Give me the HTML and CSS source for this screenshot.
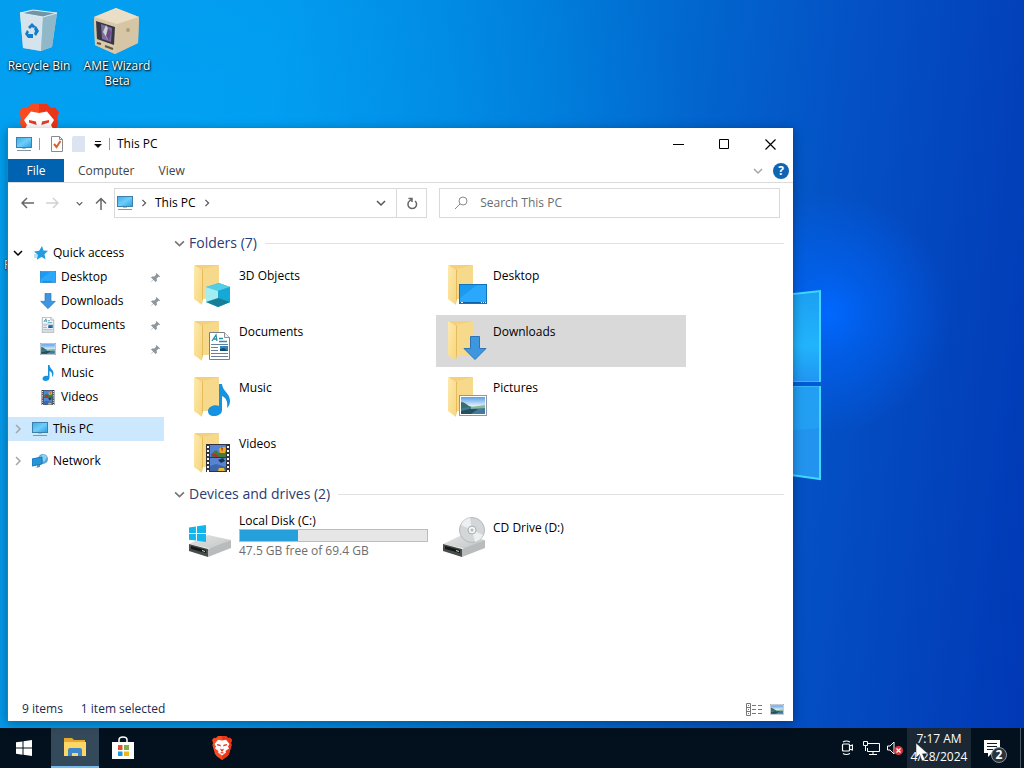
FILE: index.html
```html
<!DOCTYPE html>
<html lang="en">
	<head>
		<title>This PC</title>
		<meta charset="UTF-8">
		<link rel="stylesheet" href="styles.css">
	</head>
	<body>
		<!-- shared icons -->
		<svg class="defs" width="0" height="0">
			<defs>
				<linearGradient id="screen" x1="0" y1="0" x2="1" y2="1"><stop offset="0" stop-color="#3aaeea"/><stop offset=".5" stop-color="#6fcdf8"/><stop offset="1" stop-color="#2b9fe2"/></linearGradient>
				<linearGradient id="flap" x1="0" y1="0" x2="1" y2="1"><stop offset="0" stop-color="#fdeab0"/><stop offset="1" stop-color="#f7d67c"/></linearGradient>
				<linearGradient id="metal" x1="0" y1="0" x2="1" y2="1"><stop offset="0" stop-color="#e3e3e3"/><stop offset="1" stop-color="#c4c6c7"/></linearGradient>
				<linearGradient id="sky" x1="0" y1="0" x2="0" y2="1"><stop offset="0" stop-color="#5b9fe8"/><stop offset=".5" stop-color="#d9ecfa"/><stop offset="1" stop-color="#8cb6c9"/></linearGradient>
				<linearGradient id="pane" x1="0" y1="0" x2="0" y2="1"><stop offset="0" stop-color="#1c9ff2"/><stop offset=".6" stop-color="#21b4fc"/><stop offset="1" stop-color="#2095f2"/></linearGradient>
			</defs>
			<symbol id="i-pc" viewBox="0 0 16 16">
				<rect x=".5" y="1.5" width="15" height="10" fill="url(#screen)" stroke="#3c80ab"/>
				<path d="M6 12h4v1H6z" fill="#9fc4da"/><path d="M1 14.500h14" stroke="#8496a3"/>
			</symbol>
			<symbol id="i-folder" viewBox="0 0 36 42">
				<path d="M2 1h24v34H9z" fill="#f3d07c"/><path d="M9 5l17-4v34H9z" fill="#f6d98a"/>
				<path d="M1 1l8 5v35l-8-6z" fill="url(#flap)"/><path d="M9 6v34l1-5V5z" fill="#e5bb5c"/>
			</symbol>
			<symbol id="i-desktop" viewBox="0 0 28 20">
				<rect x=".5" y=".5" width="27" height="19" fill="#1b9af0" stroke="#1173bb"/><path d="M1 14L18 1h9v18H1z" fill="#2ba8fb"/>
				<path d="M1 18.500h27" stroke="#0c63a6"/><path d="M2 18.500h2M22 18.500h1M24 18.500h1M26 18.500h1" stroke="#fff"/>
			</symbol>
			<symbol id="i-down" viewBox="0 0 24 24">
				<path d="M7.500.5h9v12h6.500L12 23.500 1 12.500h6.500z" fill="#3e96de" stroke="#2a75b8"/>
			</symbol>
			<symbol id="i-doc" viewBox="0 0 21 28">
				<path d="M.5.5h15l5 5v22H.5z" fill="#fff" stroke="#777f87"/><path d="M15.500.5v5h5" fill="#eef1f3" stroke="#8a9299"/>
				<path d="M3 9l4-6 1 6M4 7h4M10 6.500h4M10 9.500h8" fill="none" stroke="#2c8fa8" stroke-width="1.300"/>
				<path d="M2 12.500h17M2 15.500h7M2 18.500h7M2 21.500h17M2 24.500h17" stroke="#67809c"/>
				<path d="M11 14h8v5h-8z" fill="#3184bd"/><path d="M11 17l4-1 4 3h-8z" fill="#174a68"/>
			</symbol>
			<symbol id="i-note" viewBox="0 0 22 32">
				<path d="M11 0h3c1 8 8 9 8 17 0 3-1 5-3 7 1-7-1-10-5-12v14c0 4-4 6-8 6-4 0-6-2-6-5 0-4 6-7 11-5z" fill="#1592e0"/>
			</symbol>
			<symbol id="i-pic" viewBox="0 0 28 21">
				<rect x=".5" y=".5" width="27" height="20" fill="#fff" stroke="#8c98a4"/><path d="M2 2h24v17H2z" fill="url(#sky)"/>
				<path d="M2 7c3 0 5 2 8 4l6 2-14 3z" fill="#396e68"/><path d="M2 14c7-3 17-1 24-1v6H2z" fill="#417b9c"/><path d="M2 16l13-3 4 1-7 5H2z" fill="#244f5b"/><path d="M12 12l14-2v3l-14 1z" fill="#8fb79a"/>
			</symbol>
			<symbol id="i-film" viewBox="0 0 24 28">
				<path d="M0 0h24v28H0z" fill="#33343a"/><path d="M4 1h16v12H4zM4 14h16v13H4z" fill="#5684d4"/>
				<path d="M5 10l5-4 3 3 7-2v6H5z" fill="#3c7d3a"/><path d="M13 5l2-2h4l1 2-1 4h-5z" fill="#e7ae25"/><path d="M15 3l2 1-1 4M5 10h5l3 3H9z" fill="#b12d39"/>
				<path d="M4 22l6-2 10 3v4H4z" fill="#3d67aa"/><path d="M13 24h5l1 3h-7z" fill="#e8bc31"/><path d="M12 16l5-2 2 3-4 2z" fill="#1e3553"/>
				<path d="M2 2v26M22 2v26" stroke="#fff" stroke-width="2" stroke-dasharray="2 2"/>
			</symbol>
			<symbol id="i-cube" viewBox="0 0 24 24">
				<path d="M0 4L13 0l11 4v15l-12 5L0 19z" fill="#1fa6c9"/><path d="M0 4L13 0l11 4-12 4z" fill="#52cfe6"/><path d="M0 4l12 4v16L0 19z" fill="#a3edf2"/><path d="M12 8l12-4v15l-12 5z" fill="#17a9d6"/><path d="M0 19l12-4 12 4-12 5z" fill="#167f98"/>
			</symbol>
			<symbol id="i-pin" viewBox="0 0 12 12">
				<path d="M7 1l4 4-1 .5-.8-.3-2 2 .3 2.600L6 11 3.700 8.500.8 11.300l-.2-.2L3.400 8 1 6l1.300-1.200 2.500.2 2-2L6.500 2z" fill="#8c959c"/>
			</symbol>
			<symbol id="i-down-chev" viewBox="0 0 10 10"><path d="M1 3l4 4 4-4" fill="none" stroke="currentColor" stroke-width="1.500"/></symbol>
			<symbol id="i-right-chev" viewBox="0 0 10 10"><path d="M3 1l4 4-4 4" fill="none" stroke="currentColor" stroke-width="1.500"/></symbol>
			<symbol id="i-win" viewBox="0 0 16 16"><path d="M0 2.300L6.500 1.400v6.200H0zM7.500 1.200L16 0v7.600H7.500zM0 8.500h6.500v6.200L0 13.800zM7.500 8.500H16V16l-8.500-1.200z" fill="currentColor"/></symbol>
			<symbol id="i-drive" viewBox="0 0 42 24">
				<path d="M0 11L19 2l23 5-19 9z" fill="url(#metal)"/><path d="M0 11l19 5v8L0 18z" fill="#4a4b4d"/><path d="M19 16L42 7v8l-23 9z" fill="#b9bcbd"/>
				<path d="M2 13l15 4v3L2 16z" fill="#171819"/><path d="M13 17l3 1v1l-3-1z" fill="#b8f0a5"/>
			</symbol>
			<symbol id="i-brave" viewBox="0 0 20 24">
				<path d="M6 0h8l2 2 2-.3L20 4l-1 3 .6 2-2.600 9-2 2.600L10 24l-5-3.400L3 18 .4 9 1 7 0 4l2-2.300L4 2z" fill="#fa4a20"/>
				<path d="M10 0h4l2 2 2-.3L20 4l-1 3 .6 2-2.600 9-2 2.600L10 24z" fill="#ea3518"/>
				<path d="M10 4.500l4-.7L17.500 8l-1.500 2.500 1 2-3.500 2.500.5 1.500-4 3-4-3 .5-1.500L3 12.500l1-2L2.500 8 6 3.800z" fill="#fff"/>
				<path d="M5 8l3.500.8.3 1.700L5 9.300zM15 8l-3.500.8-.3 1.700L15 9.300zM8 12.500l2 1 2-1-1 2.500-1 .8L9 15zM7.500 17l2.500-1 2.500 1-2.500.5z" fill="#e63a24"/>
			</symbol>
		</svg>

		<main class="desktop">
			<svg class="wall-logo" viewBox="0 0 38 200">
				<path d="M0 12l36-4v91H0z" fill="url(#pane)"/><path d="M0 103h36v93l-36-5z" fill="#2294ef"/><path d="M0 103h36v42l-36 3z" fill="#229ff3"/>
				<path d="M0 12l36-4v91M36 103v93l-36-5" fill="none" stroke="#3fd9ff" stroke-width="2"/><path d="M0 98.500h35M0 103.500h35" stroke="#34b7f8"/>
			</svg>
			<ul class="shortcuts">
				<li>
					<svg width="48" height="48" viewBox="0 0 48 48">
						<path d="M5 6l13-3 24 3-5 34-11 4-18-3z" fill="#a5cde0"/><path d="M6 7l13-4 21 3-10 5z" fill="#7195a7"/><path d="M5 6l23 4-2 34-18-3z" fill="#d5e4ec"/><path d="M28 10l14-4-5 34-11 4z" fill="#91b8c9"/><path d="M5 6l13-3 24 3-14 4z" fill="none" stroke="#dbeef6"/>
						<path d="M13 20l4-4 4 4-3 1-1-1-2 2zM21 19l3 5-3 5-2-2 1-3-1-2zM18 31h-5l-3-4 2-4 2 2-1 2h5z" fill="#147cc8"/>
					</svg>
					<span>Recycle Bin</span>
				</li>
				<li>
					<svg width="48" height="48" viewBox="0 0 48 48">
						<path d="M1 10L23 1l23 9-1 26-23 11L2 38z" fill="#d8c8a5"/><path d="M1 10L23 1l23 9-22 8z" fill="#eadfc6"/><path d="M24 17l22-7-1 26-23 11z" fill="#d6c6a6"/><path d="M1 10l23 7-2 30L2 38z" fill="#d9c9ab"/>
						<path d="M3 14l19 6-1 18-17-6z" fill="#373544"/><path d="M8 17l11 4-1 14-9-3z" fill="#7c6e9c"/><path d="M13 18l-3 7 5 8 2-8z" fill="#c9d2d4"/><path d="M15 21l3 4-2 9-3-5z" fill="#704787"/><path d="M4 36l4 1M12 39l8 3" stroke="#60543d" stroke-width="2"/><circle cx="35" cy="23" r="2" fill="#af9c7a"/>
					</svg>
					<span>AME Wizard Beta</span>
				</li>
				<li>
					<svg width="40" height="48"><use href="#i-brave"/></svg>
				</li>
				<li class="partial"><span>F</span></li>
			</ul>

			<section class="window">
				<header class="titlebar">
					<svg width="16" height="16"><use href="#i-pc"/></svg>
					<i class="sep"></i>
					<button class="quick" aria-label="Properties"><svg width="12" height="16" viewBox="0 0 12 16"><path d="M.5.5h8l3 3v12H.5z" fill="#fff" stroke="#8b8b8b"/><path d="M8.500.5v3h3" fill="none" stroke="#8b8b8b"/><path d="M3 8l2.500 3L9.500 5" fill="none" stroke="#d9622b" stroke-width="2"/></svg></button>
					<button class="quick" aria-label="New folder"><svg width="13" height="16" viewBox="0 0 13 16"><path d="M1 0h12v16H0V2z" fill="#dce4f2"/></svg></button>
					<button class="customize" aria-label="Customize"><svg width="8" height="8" viewBox="0 0 8 8"><path d="M1 1.500h6" stroke="#111"/><path d="M0 4h8L4 8z" fill="#111"/></svg></button>
					<i class="sep"></i>
					<h1>This PC</h1>
					<div class="controls">
						<button aria-label="Minimize"><svg width="11" height="11" viewBox="0 0 11 11"><path d="M0 5.500h11" stroke="#000"/></svg></button>
						<button aria-label="Maximize"><svg width="11" height="11" viewBox="0 0 11 11"><path d="M.5.5h9v9h-9z" fill="none" stroke="#000"/></svg></button>
						<button aria-label="Close"><svg width="11" height="11" viewBox="0 0 11 11"><path d="M.5.5l10 10M10.500.5l-10 10" stroke="#000" stroke-width="1.200"/></svg></button>
					</div>
				</header>
				<nav class="tabs">
					<button class="file">File</button>
					<button>Computer</button>
					<button>View</button>
					<div class="tabs-end">
						<button aria-label="Expand the ribbon"><svg class="light" width="10" height="10"><use href="#i-down-chev"/></svg></button>
						<button class="help" aria-label="Help">?</button>
					</div>
				</nav>
				<div class="toolbar">
					<div class="nav-buttons">
						<button aria-label="Back"><svg width="13" height="12" viewBox="0 0 13 12"><path d="M13 6H1.500M6 1L1 6l5 5" fill="none" stroke="#666" stroke-width="1.500"/></svg></button>
						<button aria-label="Forward"><svg width="13" height="12" viewBox="0 0 13 12"><path d="M0 6h11.500M7 1l5 5-5 5" fill="none" stroke="#d2d2d2" stroke-width="1.500"/></svg></button>
						<button class="recent" aria-label="Recent locations"><svg width="7" height="7"><use href="#i-down-chev"/></svg></button>
						<button aria-label="Up"><svg width="12" height="13" viewBox="0 0 12 13"><path d="M6 13V1.500M1 6.500l5-5 5 5" fill="none" stroke="#666" stroke-width="1.500"/></svg></button>
					</div>
					<div class="address">
						<svg width="16" height="16"><use href="#i-pc"/></svg>
						<svg class="crumb" width="8" height="8"><use href="#i-right-chev"/></svg>
						<button class="place">This PC</button>
						<svg class="crumb" width="8" height="8"><use href="#i-right-chev"/></svg>
						<button class="drop" aria-label="Previous locations"><svg width="10" height="10"><use href="#i-down-chev"/></svg></button>
						<button class="refresh" aria-label="Refresh"><svg width="12" height="13" viewBox="0 0 12 13"><path d="M2.500 1.500H6V5M6 2L3.500 4a4.300 4.300 0 1 0 5.500 0" fill="none" stroke="#666" stroke-width="1.500"/></svg></button>
					</div>
					<label class="search">
						<svg width="14" height="14" viewBox="0 0 14 14"><circle cx="9" cy="5" r="4" fill="none" stroke="#8a8a8a"/><path d="M6 8l-5 5" stroke="#8a8a8a"/></svg>
						<input type="text" placeholder="Search This PC" aria-label="Search This PC">
					</label>
				</div>

				<div class="panes">
					<nav class="tree">
						<a href="#"><svg class="arrow" width="10" height="10"><use href="#i-down-chev"/></svg><svg class="pic star" width="14" height="14" viewBox="0 0 14 14"><path d="M8 0l1.500 4.500L14 4.800l-3.500 3.400 1 5L7.500 11l-4.700 2.700 1-5L0 5.500l5.200-.8z" fill="#259be2"/><path d="M0 9h4M0 11h3" stroke="#76c7f2"/></svg>Quick access</a>
						<a href="#" class="sub"><svg class="pic" width="16" height="12"><use href="#i-desktop"/></svg>Desktop<svg class="pin" width="11" height="11"><use href="#i-pin"/></svg></a>
						<a href="#" class="sub"><svg class="pic" width="16" height="16"><use href="#i-down"/></svg>Downloads<svg class="pin" width="11" height="11"><use href="#i-pin"/></svg></a>
						<a href="#" class="sub"><svg class="pic" width="16" height="16"><use href="#i-doc"/></svg>Documents<svg class="pin" width="11" height="11"><use href="#i-pin"/></svg></a>
						<a href="#" class="sub"><svg class="pic" width="16" height="12"><use href="#i-pic"/></svg>Pictures<svg class="pin" width="11" height="11"><use href="#i-pin"/></svg></a>
						<a href="#" class="sub"><svg class="pic" width="16" height="16"><use href="#i-note"/></svg>Music</a>
						<a href="#" class="sub"><svg class="pic" width="16" height="15"><use href="#i-film"/></svg>Videos</a>
						<a href="#" class="root active"><svg class="arrow light" width="10" height="10"><use href="#i-right-chev"/></svg><svg class="pic" width="16" height="16"><use href="#i-pc"/></svg>This PC</a>
						<a href="#" class="root"><svg class="arrow light" width="10" height="10"><use href="#i-right-chev"/></svg><svg class="pic" width="16" height="16" viewBox="0 0 16 16"><circle cx="11" cy="6" r="5" fill="#58a9d8"/><path d="M7 4l5-3 3 3-3 5z" fill="#8fd0f0"/><path d="M0 6l10-2v7L0 13z" fill="#2696dc" stroke="#1b74b4"/><path d="M3 15l5-1v-2H5v2z" fill="#4c94bf"/></svg>Network</a>
					</nav>

					<div class="content">
						<h2><svg width="11" height="11"><use href="#i-down-chev"/></svg>Folders (7)</h2>
						<div class="items">
							<div class="item"><span class="thumb"><svg width="36" height="42"><use href="#i-folder"/></svg><svg class="over cube" width="24" height="24"><use href="#i-cube"/></svg></span><span class="name">3D Objects</span></div>
							<div class="item"><span class="thumb"><svg width="36" height="42"><use href="#i-folder"/></svg><svg class="over wide" width="28" height="20"><use href="#i-desktop"/></svg></span><span class="name">Desktop</span></div>
							<div class="item"><span class="thumb"><svg width="36" height="42"><use href="#i-folder"/></svg><svg class="over" width="21" height="28"><use href="#i-doc"/></svg></span><span class="name">Documents</span></div>
							<div class="item selected"><span class="thumb"><svg width="36" height="42"><use href="#i-folder"/></svg><svg class="over wide" width="24" height="24"><use href="#i-down"/></svg></span><span class="name">Downloads</span></div>
							<div class="item"><span class="thumb"><svg width="36" height="42"><use href="#i-folder"/></svg><svg class="over" width="22" height="32"><use href="#i-note"/></svg></span><span class="name">Music</span></div>
							<div class="item"><span class="thumb"><svg width="36" height="42"><use href="#i-folder"/></svg><svg class="over wide" width="28" height="21"><use href="#i-pic"/></svg></span><span class="name">Pictures</span></div>
							<div class="item"><span class="thumb"><svg width="36" height="42"><use href="#i-folder"/></svg><svg class="over" width="24" height="28"><use href="#i-film"/></svg></span><span class="name">Videos</span></div>
						</div>
						<h2><svg width="11" height="11"><use href="#i-down-chev"/></svg>Devices and drives (2)</h2>
						<div class="items drives">
							<div class="item">
								<svg class="drive" width="42" height="40" viewBox="0 0 42 40"><use href="#i-drive" y="16" width="42" height="24"/><use href="#i-win" y="8" width="17" height="17" color="#12b5ec"/></svg>
								<div class="disk">
									<label for="space">Local Disk (C:)</label>
									<progress id="space" max="100" value="31"></progress>
									<small>47.5 GB free of 69.4 GB</small>
								</div>
							</div>
							<div class="item">
								<svg class="drive" width="42" height="40" viewBox="0 0 42 40"><use href="#i-drive" y="16" width="42" height="24"/><circle cx="29" cy="13" r="12.500" fill="#d3d7d9" stroke="#b3b9bc"/><path d="M29 13L18 8a12 12 0 0 1 9-7zM29 13l11 5a12 12 0 0 1-8 7z" fill="#edf0f1"/><circle cx="29" cy="13" r="4" fill="#f5f5f5" stroke="#a8adb0"/><circle cx="29" cy="13" r="1.500" fill="#b5b9bb"/></svg>
								<span class="name">CD Drive (D:)</span>
							</div>
						</div>
					</div>
				</div>

				<footer class="status">
					<span>9 items</span>
					<span>1 item selected</span>
					<div class="views">
						<button aria-label="Details view"><svg width="16" height="13" viewBox="0 0 16 13"><path d="M.5.5h4v12h-4zM.5 4.500h4M.5 8.500h4" fill="none" stroke="#777"/><path d="M2 2.500h1M2 6.500h1M2 10.500h1" stroke="#777"/><path d="M6 2.500h4M12 2.500h4M6 6.500h4M12 6.500h4M6 10.500h4M12 10.500h4" stroke="#777"/></svg></button>
						<button aria-label="Large icons view"><svg width="14" height="11"><use href="#i-pic"/></svg></button>
					</div>
				</footer>
			</section>
		</main>

		<footer class="taskbar">
			<button aria-label="Start"><svg width="16" height="16"><use href="#i-win"/></svg></button>
			<button class="running" aria-label="File Explorer"><svg width="22" height="18" viewBox="0 0 22 18"><path d="M0 0h8l2 2h11v16H0z" fill="#e9a92f"/><path d="M0 4h22v14H0z" fill="#fcd667"/><path d="M4 18v-6q0-2 2-2h10q2 0 2 2v6h-4v-3H8v3z" fill="#3e88c9"/></svg></button>
			<button aria-label="Store"><svg width="24" height="24" viewBox="0 0 24 24"><path d="M8 6V4q0-3 4-3t4 3v2" fill="none" stroke="#fff" stroke-width="1.500"/><path d="M1 6h22v17H1z" fill="#fff"/><path d="M7 9h4.500v5H7z" fill="#e8502a"/><path d="M13 9h5v5h-5z" fill="#7cb342"/><path d="M7 15.500h4.500V20H7z" fill="#1a9be0"/><path d="M13 15.500h5V20h-5z" fill="#f5b41c"/></svg></button>
			<button class="brave" aria-label="Brave"><svg width="20" height="24"><use href="#i-brave"/></svg></button>
			<div class="tray">
				<button aria-label="Camera"><svg width="12" height="16" viewBox="0 0 12 16"><path d="M1.500 5q0-1 1-1h5q1 0 1 1v5q0 1-1 1h-5q-1 0-1-1zM8.500 6l3-1v5l-3-1M2 2q3-2 7 0M2 13.500q3 2 7 0" fill="none" stroke="#fff" stroke-width="1.200"/></svg></button>
				<button aria-label="Network"><svg width="17" height="15" viewBox="0 0 17 15"><path d="M5 2.500h11.500v8h-12V7M10 10.500V14M6 13.500h8M.5.5h4v4h-4zM2.500 5v5" fill="none" stroke="#fff"/></svg></button>
				<button aria-label="Volume muted"><svg width="16" height="15" viewBox="0 0 16 15"><path d="M.5 5h2.500l4-4v12L3 9H.5z" fill="none" stroke="#fff"/><circle cx="11.500" cy="9.500" r="4.500" fill="#d9363e"/><path d="M9.500 7.500l4 4M13.500 7.500l-4 4" stroke="#fff" stroke-width="1.200"/></svg></button>
				<button class="clock"><span>7:17 AM</span><span>4/28/2024</span></button>
				<button class="notes" aria-label="Notifications"><svg width="16" height="17" viewBox="0 0 16 17"><path d="M0 0h16v13H8l-4 4v-4H0z" fill="#fff"/><path d="M3 3.500h10M3 6.500h10M3 9.500h6" stroke="#0b1c29"/></svg><b>2</b></button>
			</div>
		</footer>
		<svg class="cursor" width="14" height="19" viewBox="0 0 14 19"><path d="M0 0v15l3.500-3.500L6 18l3-1.200-2.500-6H12z" fill="#fff" stroke="#222" stroke-width=".5"/></svg>
	</body>
</html>
```

FILE: styles.css
```css
* {
	box-sizing: border-box;
	margin: 0;
	padding: 0;
}

html, body { height: 100%; }

body {
	display: flex;
	flex-direction: column;
	overflow: hidden;
	font: 12px/16px "Open Sans", "Noto Sans", sans-serif;
	color: #000;
}

button {
	display: flex;
	align-items: center;
	justify-content: center;
	border: 0;
	background: none;
	font: inherit;
	color: inherit;
}

svg {
	display: block;
	flex: none;
}

ul { list-style: none; }

a {
	color: inherit;
	text-decoration: none;
}

.defs { position: absolute; }

/* desktop */
.desktop {
	position: relative;
	flex: 1;
	min-height: 0;
	background:
		radial-gradient(circle at 81% 43%, #0068ff 0, rgba(0, 104, 255, 0.6) 4%, rgba(0, 90, 240, 0) 13%),
		radial-gradient(ellipse at 14% 22%, rgba(0, 172, 255, 0.5), rgba(0, 160, 250, 0) 45%),
		linear-gradient(97deg, #0599e8 0%, #0297ea 25%, #0079d8 50%, #0450c4 78%, #0138b5 100%);
}

.wall-logo {
	position: absolute;
	left: 77%;
	top: 283px;
	width: 38px;
	height: 200px;
	margin-left: -4px;
}

.shortcuts {
	display: grid;
	grid-template-columns: 78px 78px;
	grid-auto-rows: 97px;
	padding-top: 7px;
}

.shortcuts li {
	display: flex;
	flex-direction: column;
	align-items: center;
	padding: 0 3px;
	line-height: 15px;
	text-align: center;
	color: #fff;
	text-shadow: 1px 1px 2px #000, 0 0 2px #000;
}

.shortcuts svg { margin-bottom: 3px; }

.shortcuts .partial {
	grid-row: 3;
	grid-column: 1;
	align-items: flex-start;
	padding: 56px 4px 0;
}

/* explorer window */
.window {
	position: absolute;
	top: 128px;
	left: 7px;
	right: 231px;
	bottom: 7px;
	display: flex;
	flex-direction: column;
	background: #fff;
	border: 1px solid #1883c0;
	border-width: 0 0 0 1px;
	padding-top: 1px;
	box-shadow: 0 2px 10px rgba(0, 0, 0, 0.35);
}

.titlebar {
	display: flex;
	align-items: center;
	height: 30px;
	padding-left: 8px;
}

.titlebar h1 {
	font-size: 12px;
	font-weight: normal;
}

.sep {
	width: 1px;
	height: 12px;
	margin: 0 7px;
	background: #9a9a9a;
}

.quick { margin: 0 5px 0 4px; }

.customize { margin-left: 4px; }

.controls {
	display: flex;
	height: 100%;
	margin-left: auto;
}

.controls button { width: 46px; }

.tabs {
	display: flex;
	height: 24px;
	border-bottom: 1px solid #dadbdc;
	color: #444;
}

.tabs button { padding: 0 10px 0 14px; }

.tabs .file {
	width: 56px;
	padding: 0;
	background: #0063b1;
	color: #fff;
}

.tabs-end {
	display: flex;
	align-items: center;
	margin-left: auto;
	padding-right: 4px;
}

.tabs-end .help {
	width: 16px;
	height: 16px;
	padding: 0;
	border-radius: 50%;
	background: #0f64b3;
	color: #fff;
	font-weight: bold;
}

.light { color: #a6a6a6; }

.toolbar {
	display: flex;
	align-items: center;
	padding: 5px 13px 5px 0;
}

.nav-buttons {
	display: flex;
	align-items: center;
	width: 106px;
	padding: 0 7px 0 13px;
	justify-content: space-between;
	color: #555;
}

.recent { margin-left: 6px; }

.address, .search {
	display: flex;
	align-items: center;
	height: 30px;
	border: 1px solid #d9d9d9;
}

.address {
	flex: 318;
	padding-left: 2px;
	color: #555;
}

.address .crumb { margin: 0 7px; }

.address .place { color: #000; }

.drop {
	width: 30px;
	height: 100%;
	margin-left: auto;
}

.refresh {
	width: 30px;
	height: 100%;
	border-left: 1px solid #d9d9d9;
}

.search {
	flex: 334;
	margin-left: 12px;
	padding-left: 14px;
}

.search input {
	flex: 1;
	min-width: 0;
	margin-left: 12px;
	border: 0;
	outline: 0;
	font: inherit;
}

.search input::placeholder { color: #6d6d6d; }

/* panes */
.panes {
	display: flex;
	flex: 1;
	min-height: 0;
}

.tree {
	width: 156px;
	padding-top: 18px;
}

.tree a {
	display: flex;
	align-items: center;
	height: 24px;
	padding-left: 5px;
}

.tree .arrow { margin-right: 9px; }

.tree .pic { margin-right: 5px; }

.tree .star { margin: 0 5px 0 2px; }

.tree .sub { padding-left: 32px; }

.tree .root { margin-top: 8px; }

.tree .active { background: #cce8ff; }

.tree .pin {
	margin-left: auto;
	margin-right: 3px;
}

.content {
	flex: 1;
	padding: 9px 9px 0 10px;
}

.content h2 {
	display: flex;
	align-items: center;
	height: 22px;
	font-size: 14px;
	font-weight: normal;
	color: #2c3b72;
}

.content h2 svg {
	margin-right: 4px;
	color: #777;
}

.content h2::after {
	content: "";
	flex: 1;
	height: 1px;
	margin-left: 8px;
	background: #e2e2e2;
}

.items {
	display: grid;
	grid-template-columns: 250px 250px;
	gap: 4px;
	padding: 5px 0 0 8px;
}

.item {
	display: flex;
	height: 52px;
}

.items .selected { background: #d9d9d9; }

.thumb {
	position: relative;
	width: 42px;
	height: 48px;
	margin: 5px 4px 0 11px;
}

.thumb .over {
	position: absolute;
	right: 5px;
	bottom: 8px;
}

.thumb .wide { right: 2px; }

.thumb .cube { bottom: 5px; }

.name { padding-top: 9px; }

.items + h2 { margin-top: 4px; }

.drives { padding-top: 6px; }

.drive { margin: 6px 8px 0 7px; }

.disk {
	display: flex;
	flex-direction: column;
	width: 189px;
	padding-top: 2px;
}

.disk progress {
	appearance: none;
	width: 100%;
	height: 13px;
	border: 1px solid #bcbcbc;
}

.disk progress::-webkit-progress-bar { background: #e6e6e6; }

.disk progress::-webkit-progress-value { background: #26a0da; }

.disk small {
	margin-top: 1px;
	font-size: 12px;
	color: #6d6d6d;
}

.status {
	display: flex;
	align-items: center;
	height: 24px;
	padding: 0 9px 0 14px;
	color: #1e2a50;
}

.status span { margin-right: 18px; }

.views {
	display: flex;
	gap: 8px;
	margin-left: auto;
}

/* taskbar */
.taskbar {
	display: flex;
	height: 40px;
	background: #02111d;
	color: #fff;
}

.taskbar > button { width: 48px; }

.taskbar .running {
	margin-left: 3px;
	background: #34495a;
	border-bottom: 2px solid #76b9ed;
}

.taskbar .brave { margin-left: 51px; }

.tray {
	display: flex;
	margin-left: auto;
	padding-right: 8px;
	border-right: 1px solid #4a5863;
	margin-right: 3px;
}

.tray button { width: 24px; }

.tray .clock {
	flex-direction: column;
	width: 64px;
	line-height: 18px;
	background: #1b2733;
}

.tray .notes {
	position: relative;
	width: 41px;
}

.notes b {
	position: absolute;
	right: 5px;
	bottom: 5px;
	width: 16px;
	height: 16px;
	border: 1px solid #8a939a;
	border-radius: 50%;
	background: #2a333b;
	line-height: 14px;
}

.cursor {
	position: absolute;
	right: 94px;
	bottom: 6px;
}
```
